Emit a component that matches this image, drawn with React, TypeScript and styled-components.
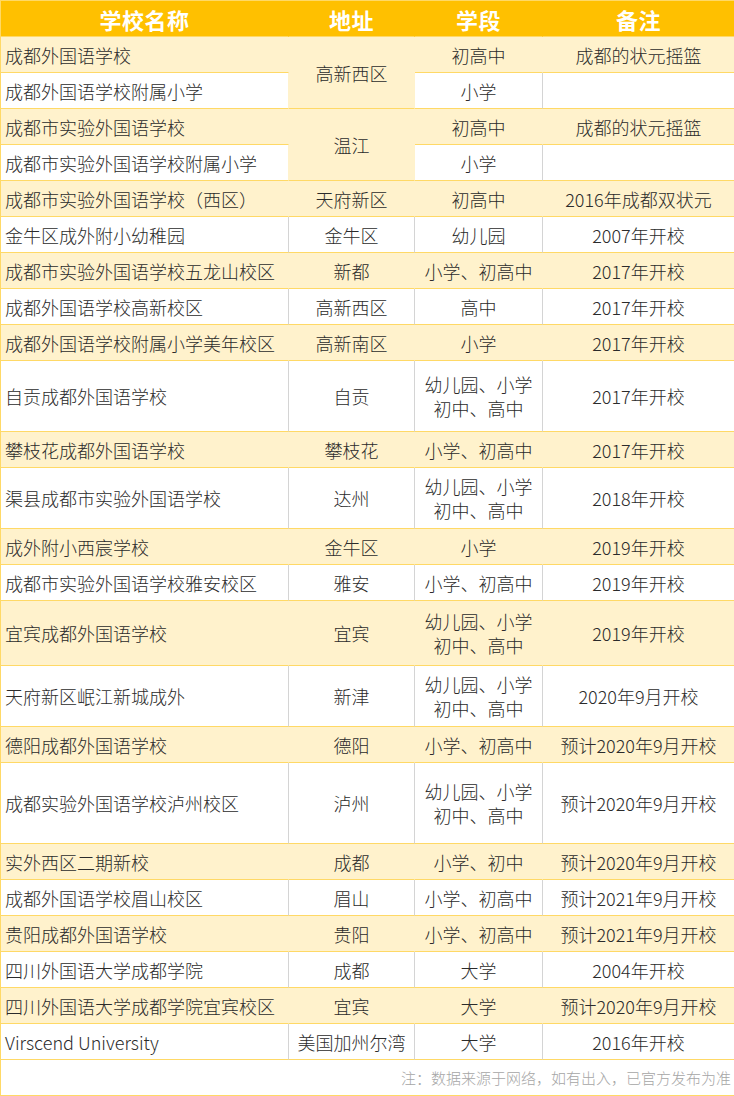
import React from "react";
import styled, { createGlobalStyle } from "styled-components";

const GlobalStyle = createGlobalStyle`
  html, body { margin: 0; padding: 0; background: #ffffff; }
  body { font-family: "Noto Sans CJK SC", "Noto Sans", sans-serif; }
`;

const YELLOW_BG = "#FFF2CC";
const LINE_Y = "#FFD966";
const LINE_G = "#D4D4D4";

type Tone = "y" | "w";

interface Row {
  name: string;
  addr?: string;
  addrSpan?: number;
  stage: string[];
  note: string;
  tone: Tone;
  h: number;
}

const rows: Row[] = [
  { name: "成都外国语学校", addr: "高新西区", addrSpan: 2, stage: ["初高中"], note: "成都的状元摇篮", tone: "y", h: 36 },
  { name: "成都外国语学校附属小学", stage: ["小学"], note: "", tone: "w", h: 36 },
  { name: "成都市实验外国语学校", addr: "温江", addrSpan: 2, stage: ["初高中"], note: "成都的状元摇篮", tone: "y", h: 36 },
  { name: "成都市实验外国语学校附属小学", stage: ["小学"], note: "", tone: "w", h: 36 },
  { name: "成都市实验外国语学校（西区）", addr: "天府新区", stage: ["初高中"], note: "2016年成都双状元", tone: "y", h: 36 },
  { name: "金牛区成外附小幼稚园", addr: "金牛区", stage: ["幼儿园"], note: "2007年开校", tone: "w", h: 36 },
  { name: "成都市实验外国语学校五龙山校区", addr: "新都", stage: ["小学、初高中"], note: "2017年开校", tone: "y", h: 36 },
  { name: "成都外国语学校高新校区", addr: "高新西区", stage: ["高中"], note: "2017年开校", tone: "w", h: 36 },
  { name: "成都外国语学校附属小学美年校区", addr: "高新南区", stage: ["小学"], note: "2017年开校", tone: "y", h: 36 },
  { name: "自贡成都外国语学校", addr: "自贡", stage: ["幼儿园、小学", "初中、高中"], note: "2017年开校", tone: "w", h: 71 },
  { name: "攀枝花成都外国语学校", addr: "攀枝花", stage: ["小学、初高中"], note: "2017年开校", tone: "y", h: 36 },
  { name: "渠县成都市实验外国语学校", addr: "达州", stage: ["幼儿园、小学", "初中、高中"], note: "2018年开校", tone: "w", h: 61 },
  { name: "成外附小西宸学校", addr: "金牛区", stage: ["小学"], note: "2019年开校", tone: "y", h: 36 },
  { name: "成都市实验外国语学校雅安校区", addr: "雅安", stage: ["小学、初高中"], note: "2019年开校", tone: "w", h: 36 },
  { name: "宜宾成都外国语学校", addr: "宜宾", stage: ["幼儿园、小学", "初中、高中"], note: "2019年开校", tone: "y", h: 65 },
  { name: "天府新区岷江新城成外", addr: "新津", stage: ["幼儿园、小学", "初中、高中"], note: "2020年9月开校", tone: "w", h: 61 },
  { name: "德阳成都外国语学校", addr: "德阳", stage: ["小学、初高中"], note: "预计2020年9月开校", tone: "y", h: 36 },
  { name: "成都实验外国语学校泸州校区", addr: "泸州", stage: ["幼儿园、小学", "初中、高中"], note: "预计2020年9月开校", tone: "w", h: 81 },
  { name: "实外西区二期新校", addr: "成都", stage: ["小学、初中"], note: "预计2020年9月开校", tone: "y", h: 36 },
  { name: "成都外国语学校眉山校区", addr: "眉山", stage: ["小学、初高中"], note: "预计2021年9月开校", tone: "w", h: 36 },
  { name: "贵阳成都外国语学校", addr: "贵阳", stage: ["小学、初高中"], note: "预计2021年9月开校", tone: "y", h: 36 },
  { name: "四川外国语大学成都学院", addr: "成都", stage: ["大学"], note: "2004年开校", tone: "w", h: 36 },
  { name: "四川外国语大学成都学院宜宾校区", addr: "宜宾", stage: ["大学"], note: "预计2020年9月开校", tone: "y", h: 36 },
  { name: "Virscend University", addr: "美国加州尔湾", stage: ["大学"], note: "2016年开校", tone: "w", h: 36 },
];

const Sheet = styled.div<{ $rows: string }>`
  width: 734px;
  box-sizing: border-box;
  border-top: 1px solid ${LINE_Y};
  border-left: 1px solid ${LINE_Y};
  border-right: 1px solid ${LINE_Y};
  display: grid;
  grid-template-columns: 288px 126px 128px 191px;
  grid-template-rows: ${(p) => p.$rows};
  color: #2b2b2b;
  font-size: 18px;
  font-weight: 300;
`;

const HeadCell = styled.div<{ $last?: boolean }>`
  background: #ffc000;
  color: #ffffff;
  font-weight: 700;
  font-size: 22px;
  display: flex;
  align-items: center;
  justify-content: center;
  border-bottom: 1px solid ${LINE_Y};
  border-right: ${(p) => (p.$last ? "none" : "1px solid #ffc000")};
  letter-spacing: 0.5px;
`;

const Cell = styled.div<{ $tone: Tone; $span?: number; $left?: boolean; $last?: boolean; $vline?: Tone }>`
  grid-row: span ${(p) => p.$span ?? 1};
  background: ${(p) => (p.$tone === "y" ? YELLOW_BG : "#ffffff")};
  display: flex;
  flex-direction: column;
  align-items: ${(p) => (p.$left ? "flex-start" : "center")};
  justify-content: center;
  padding-left: ${(p) => (p.$left ? "4px" : "0")};
  border-bottom: 1px solid ${LINE_Y};
  border-right: ${(p) =>
    p.$last ? "none" : `1px solid ${(p.$vline ?? p.$tone) === "y" ? YELLOW_BG : LINE_G}`};
  white-space: nowrap;
  overflow: hidden;
`;

const Line = styled.span`
  display: block;
  line-height: 24px;
`;

const NoteRow = styled.div`
  grid-column: 1 / -1;
  display: flex;
  align-items: center;
  justify-content: flex-end;
  padding-right: 3px;
  font-size: 15px;
  color: #a6a6a6;
  border-bottom: 1px solid ${LINE_Y};
  background: #ffffff;
`;

export default function App() {
  const template = ["36px", ...rows.map((r) => `${r.h}px`), "36px"].join(" ");
  return (
    <>
      <GlobalStyle />
      <Sheet $rows={template}>
        <HeadCell>学校名称</HeadCell>
        <HeadCell>地址</HeadCell>
        <HeadCell>学段</HeadCell>
        <HeadCell $last>备注</HeadCell>
        {rows.map((r, i) => {
          const nextMergedYellow = r.addr === undefined;
          return (
            <React.Fragment key={i}>
              <Cell $tone={r.tone} $left $vline={nextMergedYellow ? "y" : r.tone}>
                {r.name}
              </Cell>
              {r.addr !== undefined && (
                <Cell $tone={r.tone} $span={r.addrSpan}>
                  {r.addr}
                </Cell>
              )}
              <Cell $tone={r.tone}>
                {r.stage.map((s, j) => (
                  <Line key={j}>{s}</Line>
                ))}
              </Cell>
              <Cell $tone={r.tone} $last>
                {r.note}
              </Cell>
            </React.Fragment>
          );
        })}
        <NoteRow>注：数据来源于网络，如有出入，已官方发布为准</NoteRow>
      </Sheet>
    </>
  );
}
